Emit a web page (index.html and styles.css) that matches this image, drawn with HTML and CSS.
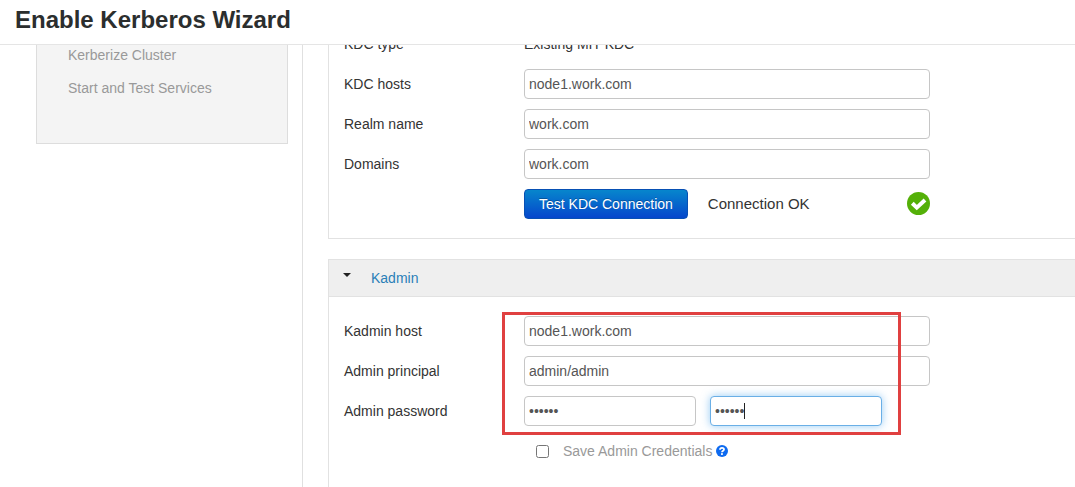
FILE: index.html
```html
<!DOCTYPE html>
<html lang="en">
<head>
<meta charset="utf-8">
<title>Enable Kerberos Wizard</title>
<link rel="stylesheet" href="styles.css">
</head>
<body>
<header class="topbar"><h1 class="title">Enable Kerberos Wizard</h1></header>
<div class="layout">
  <aside class="sidebar">
    <ul class="steps">
      <li class="step">Kerberize Cluster</li>
      <li class="step">Start and Test Services</li>
    </ul>
  </aside>
  <main class="content">
    <section class="panel panel-kdc">
      <div class="row"><span class="label">KDC type</span><span>Existing MIT KDC</span></div>
      <div class="row"><label class="label" for="hosts">KDC hosts</label><input class="field" id="hosts" type="text" value="node1.work.com"></div>
      <div class="row"><label class="label" for="realm">Realm name</label><input class="field" id="realm" type="text" value="work.com"></div>
      <div class="row"><label class="label" for="domains">Domains</label><input class="field" id="domains" type="text" value="work.com"></div>
      <div class="row">
        <span class="label"></span>
        <div class="test">
          <button class="btn" type="button">Test KDC Connection</button>
          <span class="status">Connection OK</span>
          <svg class="ok" viewBox="0 0 24 24" aria-hidden="true"><circle cx="12.500" cy="11.500" r="11.500" fill="#54b008"/><path d="M6.300 11.200L10.800 15.600L19 8" fill="none" stroke="#fff" stroke-width="4"/></svg>
        </div>
      </div>
    </section>
    <section class="panel panel-kadmin">
      <h2 class="panel-head"><span class="caret"></span><a class="panel-link" href="#kadmin">Kadmin</a></h2>
      <div class="panel-body" id="kadmin">
        <div class="row"><label class="label" for="khost">Kadmin host</label><input class="field" id="khost" type="text" value="node1.work.com"></div>
        <div class="row"><label class="label" for="principal">Admin principal</label><input class="field" id="principal" type="text" value="admin/admin"></div>
        <div class="row">
          <label class="label" for="pass">Admin password</label>
          <div class="passwords">
            <input class="field" id="pass" type="password" value="secret">
            <div class="active-wrap">
              <input class="field field-active" type="password" value="secret" aria-label="Confirm admin password">
              <span class="cursor"></span>
            </div>
          </div>
        </div>
        <div class="row">
          <span class="label"></span>
          <div class="save">
            <input class="check" id="save" type="checkbox">
            <label for="save">Save Admin Credentials</label>
            <svg class="help" viewBox="0 0 12 12" aria-hidden="true"><circle cx="6" cy="6" r="6" fill="#0d6af0"/><path d="M4 4.700C4.100 2.300 8 2.300 8 4.500C8 5.800 6 5.700 6 7.300" fill="none" stroke="#fff" stroke-width="1.800"/><rect x="5" y="8.200" width="1.900" height="1.700" fill="#fff"/></svg>
          </div>
        </div>
        <div class="highlight"></div>
      </div>
    </section>
  </main>
</div>
</body>
</html>
```
FILE: styles.css
```css
* { box-sizing: border-box; }

body {
  margin: 0;
  background: #fff;
  color: #333;
  font: 14px/20px "Liberation Sans", Arial, sans-serif;
}

/* Fixed bar that the page scrolls under */
.topbar {
  position: fixed;
  top: 0;
  left: 0;
  right: 0;
  z-index: 2;
  height: 45px;
  padding: 0 15px;
  background: #fff;
  border-bottom: 1px solid #e5e5e5;
}

.title { margin: 0; font-size: 24px; line-height: 40px; color: #2b2e2e; }

.layout { display: flex; min-height: 100vh; }

.sidebar {
  flex: none;
  width: 303px;
  padding: 0 14px 0 36px;
  border-right: 1px solid #e0e0e0;
}

.steps {
  margin: 0;
  padding: 39px 31px 38px;
  list-style: none;
  background: #f4f4f4;
  border: 1px solid #ddd;
  border-top: 0;
  color: #999;
}

.step { line-height: 33px; }

.content {
  flex: 1;
  display: flex;
  flex-direction: column;
  gap: 20px;
  padding-left: 25px;
}

.panel { border: 1px solid #e2e2e2; border-right: 0; }
.panel-kdc { padding: 24px 15px 14px; border-top: 0; }
.panel-kadmin { flex: 1; border-bottom: 0; }

.panel-head {
  display: flex;
  align-items: center;
  margin: 0;
  height: 37px;
  padding: 0 14px;
  gap: 20px;
  background: #efefef;
  border-bottom: 1px solid #e2e2e2;
  font-size: 14px;
  font-weight: normal;
}

.caret {
  margin-bottom: 7px;
  border: 4px solid transparent;
  border-top-color: #222;
  border-bottom: 0;
}

.panel-link { color: #2a7fb8; text-decoration: none; }
.panel-body { position: relative; padding: 14px 15px; }
.row { display: flex; align-items: center; height: 40px; }
.label { flex: none; width: 180px; }

.field {
  width: 406px;
  height: 30px;
  margin: 0;
  padding: 4px;
  border: 1px solid #c6c6c6;
  border-radius: 4px;
  background: #fff;
  color: #555;
  font: inherit;
}

.test { display: flex; align-items: center; width: 406px; }

.btn {
  height: 30px;
  padding: 0 14px;
  border: 1px solid #0850b4;
  border-radius: 4px;
  background: linear-gradient(#0786cc, #0546cc);
  color: #fff;
  font: inherit;
  text-shadow: 0 -1px 0 rgba(0, 0, 0, 0.25);
}

.status { margin-left: 20px; font-size: 15px; }
.ok { width: 24px; height: 24px; margin-left: auto; }

.passwords { display: flex; gap: 14px; }
.passwords .field { width: 172px; }
.active-wrap { position: relative; }

.field-active {
  border-color: #6aafe6;
  box-shadow: 0 0 8px rgba(82, 168, 236, 0.6);
}

.cursor {
  position: absolute;
  top: 7px;
  left: 34px;
  width: 1px;
  height: 16px;
  background: #222;
}

.save { display: flex; align-items: center; padding-left: 12px; color: #999; }
.check { width: 13px; height: 13px; margin: 0 14px 0 0; }
.help { width: 12px; height: 12px; margin-left: 4px; }

/* Outline drawn around the credential fields */
.highlight {
  position: absolute;
  top: 15px;
  left: 173px;
  width: 399px;
  height: 123px;
  border: 3px solid #e04040;
  pointer-events: none;
}
```
